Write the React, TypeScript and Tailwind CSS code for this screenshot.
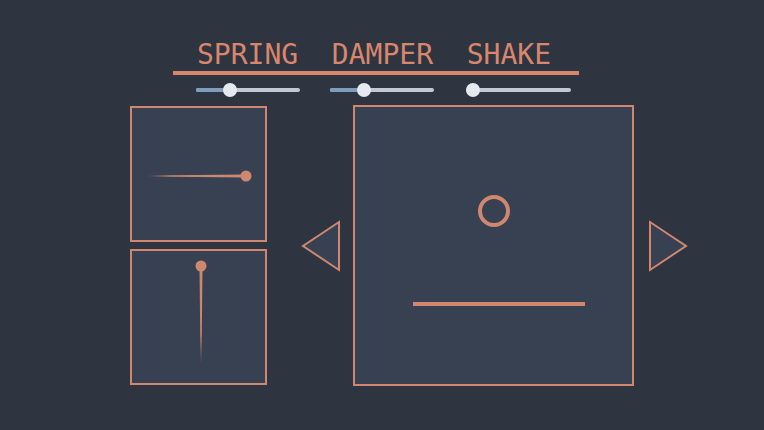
import React from "react";

const ORANGE = "#d08770";

function Slider({ width, value, ml }: { width: number; value: number; ml: number }) {
  const r = 7;
  const cx = r + value * (width - 2 * r);
  return (
    <div className="relative h-[14px]" style={{ width, marginLeft: ml }}>
      <div className="absolute left-0 right-0 top-[5px] h-[4px] rounded-full bg-[#c3c8d0]" />
      <div className="absolute left-0 top-[5px] h-[4px] rounded-full bg-[#7f9cba]" style={{ width: cx }} />
      <div className="absolute top-0 h-[14px] w-[14px] rounded-full bg-[#e5e9f0]" style={{ left: cx - r }} />
    </div>
  );
}

function Tri({ dir }: { dir: "left" | "right" }) {
  const pts = dir === "left" ? "38,2 38,50 2,26" : "2,2 2,50 38,26";
  return (
    <svg width="40" height="52" viewBox="0 0 40 52" className="block shrink-0">
      <polygon points={pts} fill="#374151" stroke={ORANGE} strokeWidth="2" strokeLinejoin="miter" />
    </svg>
  );
}

export default function App() {
  return (
    <div className="w-[764px] h-[430px] bg-[#2e3440] overflow-hidden">
      <div className="pl-[173px] pt-[39px]">
        <div
          className="w-[406px] pr-[4px] text-center text-[28px] leading-[32px] whitespace-pre text-[#d8876c]"
          style={{ fontFamily: '"DejaVu Sans Mono", monospace' }}
        >
          {"SPRING  DAMPER  SHAKE"}
        </div>
        <div className="w-[406px] h-[4px] bg-[#d8876c]" />
        <div className="flex mt-[8px]">
          <Slider width={104} value={0.3} ml={23} />
          <Slider width={104} value={0.3} ml={30} />
          <Slider width={105} value={0} ml={32} />
        </div>
      </div>
      <div className="flex items-center mt-[8px]">
        <div className="ml-[130px] flex flex-col gap-[7px]">
          <div className="w-[137px] h-[136px] border-2 border-[#d08770] bg-[#374151]">
            <svg width="133" height="132" viewBox="0 0 133 132" className="block">
              <defs>
                <linearGradient id="gh" x1="0" y1="0" x2="1" y2="0">
                  <stop offset="0" stopColor={ORANGE} stopOpacity="0" />
                  <stop offset="0.22" stopColor={ORANGE} stopOpacity="0.95" />
                  <stop offset="1" stopColor={ORANGE} stopOpacity="1" />
                </linearGradient>
              </defs>
              <polygon points="16,67.5 114,66.5 114,69.5 16,68.5" fill="url(#gh)" />
              <circle cx="114" cy="68" r="5.5" fill={ORANGE} />
            </svg>
          </div>
          <div className="w-[137px] h-[136px] border-2 border-[#d08770] bg-[#374151]">
            <svg width="133" height="132" viewBox="0 0 133 132" className="block">
              <defs>
                <linearGradient id="gv" x1="0" y1="1" x2="0" y2="0">
                  <stop offset="0" stopColor={ORANGE} stopOpacity="0" />
                  <stop offset="0.3" stopColor={ORANGE} stopOpacity="0.95" />
                  <stop offset="1" stopColor={ORANGE} stopOpacity="1" />
                </linearGradient>
              </defs>
              <polygon points="67.5,15 70.5,15 69.5,113 68.5,113" fill="url(#gv)" />
              <circle cx="69" cy="15" r="5.5" fill={ORANGE} />
            </svg>
          </div>
        </div>
        <div className="ml-[34px]">
          <Tri dir="left" />
        </div>
        <div className="ml-[12px] w-[281px] h-[281px] border-2 border-[#d08770] bg-[#374151]">
          <svg width="277" height="277" viewBox="0 0 277 277" className="block">
            <circle cx="139" cy="104" r="14" fill="none" stroke={ORANGE} strokeWidth="4" />
            <rect x="58" y="195" width="172" height="4" fill={ORANGE} />
          </svg>
        </div>
        <div className="ml-[14px]">
          <Tri dir="right" />
        </div>
      </div>
    </div>
  );
}
